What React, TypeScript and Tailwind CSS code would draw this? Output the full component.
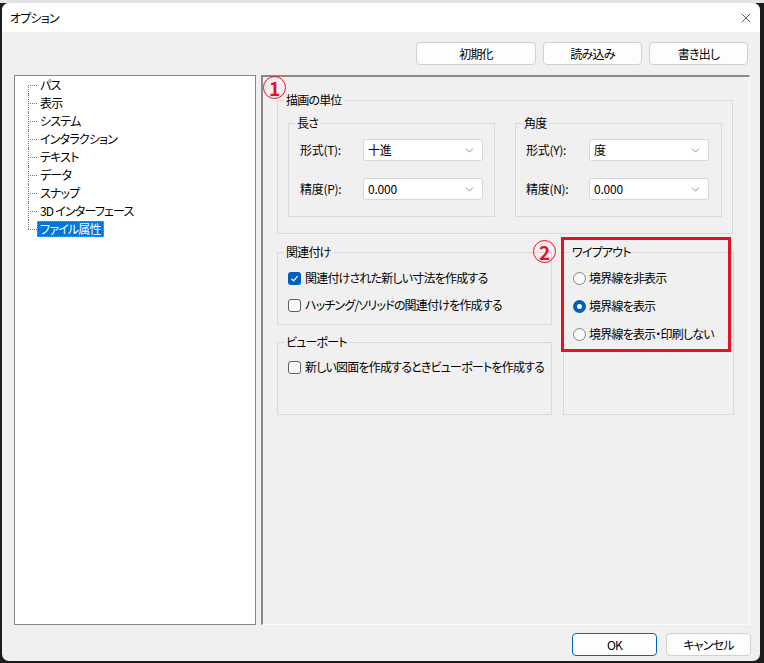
import { X, ChevronDown } from 'lucide-react';

const treeItems = ['パス', '表示', 'システム', 'インタラクション', 'テキスト', 'データ', 'スナップ', '3D インターフェース', 'ファイル属性'];

function Select({ value }: { value: string }) {
  return (
    <div className="w-[120px] h-[22px] bg-white border border-[#d6d6d6] rounded-[3px] flex items-center justify-between pl-[4px] pr-[6px]">
      <span className="tracking-[-0.2px]">{value}</span>
      <ChevronDown className="w-[13px] h-[13px] text-[#5c5c5c]" strokeWidth={1.2} />
    </div>
  );
}

function Checkbox({ checked, label }: { checked?: boolean; label: string }) {
  return (
    <div className="flex items-center h-[18px] gap-[4px] whitespace-nowrap">
      {checked ? (
        <span className="w-[13px] h-[13px] rounded-[3px] bg-[#005fb8] flex items-center justify-center shrink-0">
          <svg width="9" height="9" viewBox="0 0 9 9" fill="none">
            <path d="M1.5 4.8 L3.6 6.8 L7.6 2.2" stroke="white" strokeWidth="1.2" />
          </svg>
        </span>
      ) : (
        <span className="w-[13px] h-[13px] rounded-[3px] border border-[#5f5f5f] bg-[#fbfbfb] shrink-0" />
      )}
      <span>{label}</span>
    </div>
  );
}

function Radio({ checked, label }: { checked?: boolean; label: string }) {
  return (
    <div className="flex items-center h-[18px] gap-[3px] whitespace-nowrap">
      {checked ? (
        <span className="w-[13px] h-[13px] rounded-full bg-[#005fb8] flex items-center justify-center shrink-0">
          <span className="w-[5px] h-[5px] rounded-full bg-white" />
        </span>
      ) : (
        <span className="w-[13px] h-[13px] rounded-full border border-[#858585] bg-[#f8f8f8] shrink-0" />
      )}
      <span>{label}</span>
    </div>
  );
}

function Circled({ n }: { n: string }) {
  return (
    <div className="w-[23px] h-[23px] rounded-full border border-[#e81123] flex items-center justify-center text-[#e81123] text-[19px] leading-none font-semibold tracking-normal">
      {n}
    </div>
  );
}

export default function App() {
  return (
    <div className="w-[764px] h-[663px] bg-[#1c1c1c] flex flex-col overflow-hidden text-[12px] leading-[16px] tracking-[-0.8px] text-black font-['Noto_Sans_CJK_JP','Noto_Sans',sans-serif] [font-feature-settings:'palt']">
      <div className="h-[3px] bg-[#e4e4e4]" />
      <div className="ml-[2px] w-[758px] h-[658px] bg-[#f0f0f0] rounded-[7px] overflow-hidden flex flex-col">
        {/* Title bar */}
        <div className="h-[29px] bg-white flex items-center justify-between pl-[8px] pr-[6px] shrink-0">
          <span>オプション</span>
          <X className="w-[16px] h-[16px] text-[#1a1a1a]" strokeWidth={1.1} />
        </div>

        {/* Top buttons */}
        <div className="mt-[10px] flex justify-end gap-[7px] pr-[12px]">
          <button className="w-[120px] h-[23px] bg-[#fdfdfd] border border-[#d0d0d0] rounded-[4px]">初期化</button>
          <button className="w-[99px] h-[23px] bg-[#fdfdfd] border border-[#d0d0d0] rounded-[4px]">読み込み</button>
          <button className="w-[99px] h-[23px] bg-[#fdfdfd] border border-[#d0d0d0] rounded-[4px]">書き出し</button>
        </div>

        {/* Main */}
        <div className="mt-[10px] ml-[12px] flex gap-[5px] h-[550px]">
          {/* Tree */}
          <div className="w-[242px] h-full bg-white border border-[#828790]">
            {treeItems.map((item, i) => {
              const last = i === treeItems.length - 1;
              return (
                <div key={item} className="flex h-[18px]">
                  <span className="w-[13px]" />
                  <span className="w-[9px] relative">
                    <span
                      className={`absolute left-0 border-l border-dotted border-[#7a7a7a] ${
                        i === 0 ? 'top-1/2 bottom-0' : last ? 'top-0 h-1/2' : 'top-0 bottom-0'
                      }`}
                    />
                    <span className="absolute left-0 right-0 top-1/2 border-t border-dotted border-[#7a7a7a]" />
                  </span>
                  <span
                    className={`h-[16px] mt-[1px] px-[2px] leading-[14px] whitespace-pre ${
                      last ? 'bg-[#0078d7] text-white border border-dotted border-[#c89040]' : 'border border-transparent'
                    }`}
                  >
                    {item}
                  </span>
                </div>
              );
            })}
          </div>

          {/* Right panel */}
          <div className="w-[489px] h-full relative border-l-2 border-t-2 border-[#8a8a8a] border-r border-b border-r-[#fafafa] border-b-[#fafafa] flex flex-col">
            <fieldset className="mt-[15px] ml-[14px] w-[456px] h-[142px] border border-[#d9d9d9]">
              <legend className="ml-[6px] px-[2px]">描画の単位</legend>
              <div className="mt-[7px] ml-[10px] flex gap-[20px]">
                <fieldset className="w-[207px] h-[102px] border border-[#d9d9d9]">
                  <legend className="ml-[6px] px-[2px]">長さ</legend>
                  <div className="mt-[8px] pl-[11px] flex items-center">
                    <span className="w-[63px] tracking-[-0.3px]">形式(T):</span>
                    <Select value="十進" />
                  </div>
                  <div className="mt-[17px] pl-[11px] flex items-center">
                    <span className="w-[63px] tracking-[-0.3px]">精度(P):</span>
                    <Select value="0.000" />
                  </div>
                </fieldset>
                <fieldset className="w-[207px] h-[102px] border border-[#d9d9d9]">
                  <legend className="ml-[6px] px-[2px]">角度</legend>
                  <div className="mt-[8px] pl-[10px] flex items-center">
                    <span className="w-[63px] tracking-[-0.3px]">形式(Y):</span>
                    <Select value="度" />
                  </div>
                  <div className="mt-[17px] pl-[10px] flex items-center">
                    <span className="w-[63px] tracking-[-0.3px]">精度(N):</span>
                    <Select value="0.000" />
                  </div>
                </fieldset>
              </div>
            </fieldset>

            <div className="mt-[10px] ml-[14px] flex gap-[11px]">
              <div className="flex flex-col gap-[9px]">
                <fieldset className="w-[275px] h-[81px] border border-[#d9d9d9]">
                  <legend className="ml-[6px] px-[2px]">関連付け</legend>
                  <div className="mt-[9px] pl-[10px] flex flex-col gap-[9px]">
                    <Checkbox checked label="関連付けされた新しい寸法を作成する" />
                    <Checkbox label="ハッチング/ソリッドの関連付けを作成する" />
                  </div>
                </fieldset>
                <fieldset className="w-[275px] h-[81px] border border-[#d9d9d9]">
                  <legend className="ml-[6px] px-[2px]">ビューポート</legend>
                  <div className="mt-[8px] pl-[10px]">
                    <Checkbox label="新しい図面を作成するときビューポートを作成する" />
                  </div>
                </fieldset>
              </div>
              <fieldset className="w-[171px] h-[171px] border border-[#d9d9d9]">
                <legend className="ml-[6px] px-[2px]">ワイプアウト</legend>
                <div className="mt-[9px] pl-[9px] flex flex-col gap-[10px]">
                  <Radio label="境界線を非表示" />
                  <Radio checked label="境界線を表示" />
                  <Radio label="境界線を表示・印刷しない" />
                </div>
              </fieldset>
            </div>

            {/* Annotations */}
            <div className="absolute left-0 top-[-1px]">
              <Circled n="1" />
            </div>
            <div className="absolute left-[270px] top-[163px]">
              <Circled n="2" />
            </div>
            <div className="absolute left-[298px] top-[160px] w-[170px] h-[115px] border-[3px] border-[#e81123]" />
          </div>
        </div>

        {/* Bottom buttons */}
        <div className="mt-[8px] flex justify-end gap-[9px] pr-[9px]">
          <button className="w-[85px] h-[23px] bg-[#fdfdfd] border border-[#0067c0] rounded-[4px]">OK</button>
          <button className="w-[85px] h-[23px] bg-[#fdfdfd] border border-[#d0d0d0] rounded-[4px]">キャンセル</button>
        </div>
      </div>
    </div>
  );
}
